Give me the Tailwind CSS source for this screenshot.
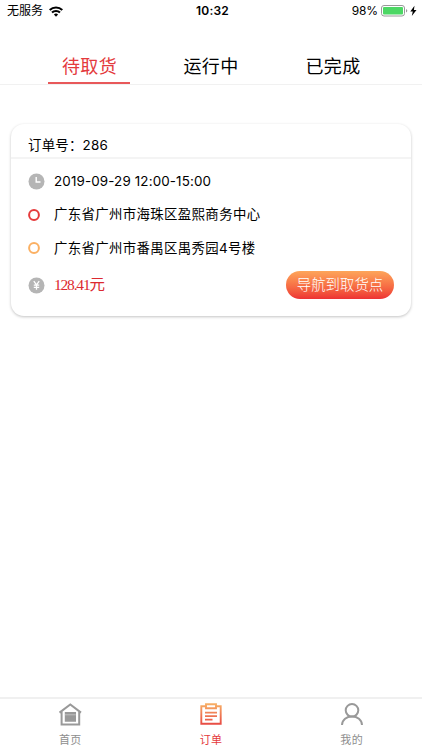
<!DOCTYPE html>
<html lang="zh-CN">
<head>
<meta charset="utf-8">
<title>订单</title>
<script src="https://cdn.jsdelivr.net/npm/@tailwindcss/browser@4"></script>
</head>
<body class="bg-white font-['Inter','Noto_Sans_CJK_SC',sans-serif] text-black">
<div class="flex h-[750px] w-[422px] flex-col overflow-hidden">
  <header class="grid h-[22px] shrink-0 grid-cols-3 items-center pr-[4px] pl-[7px] text-[12px] leading-[22px] whitespace-nowrap">
    <div class="flex items-center gap-[6px]">
      <span>无服务</span>
      <svg class="h-[11px] w-[14px]" viewBox="0 0 14 11" fill="none" stroke="#000" stroke-width="2.1"><path d="M.7 4a9 9 0 0 1 12.6 0M3 6.6a5.7 5.7 0 0 1 8 0"/><path d="M7 10.7 4.9 8.6a3 3 0 0 1 4.2 0z" fill="#000" stroke="none"/></svg>
    </div>
    <div class="text-center font-semibold tracking-[.25px]">10:32</div>
    <div class="flex items-center justify-end">
      <span class="mr-[3px] tracking-[-.1px]">98%</span>
      <svg class="h-[12px] w-[37px]" viewBox="0 0 37 12"><rect x=".5" y=".5" width="23" height="10.5" rx="2.5" fill="#fff" stroke="#999"/><rect x="2" y="2" width="20" height="7.5" rx="1" fill="#4cd764"/><path d="M25 4v3.5q1.3-.5 1.3-1.75T25 4" fill="#999"/><path d="M33.5.8 29.3 6.4h2.5L30.8 11l4.7-6h-2.6z"/></svg>
    </div>
  </header>

  <nav class="flex h-[63px] shrink-0 items-end justify-between border-b border-[#f1f1f1] px-[48px] text-[18px] tracking-[.4px]">
    <div class="flex h-[36px] w-[82px] justify-center border-b-2 border-[#e8585a] pl-px leading-[38px] text-[#e43a3d]">待取货</div>
    <div class="h-[36px] w-[82px] text-center leading-[38px]">运行中</div>
    <div class="h-[36px] w-[82px] text-center leading-[38px]">已完成</div>
  </nav>

  <main class="flex-1 px-[11px] pt-[39px]">
    <section class="h-[192px] rounded-[13px] bg-white text-[13.4px] shadow-[0_1px_3px_rgba(0,0,0,.24)]">
      <h2 class="flex h-[35px] items-center border-b-2 border-[#f4f4f4] pt-[9px] pl-[17px] tracking-[.25px]">订单号：286</h2>
      <div class="flex flex-col pr-[17px] pl-[17px]">
        <div class="flex h-[44px] items-center gap-[9px]">
          <svg class="size-[17px]" viewBox="0 0 17 17"><circle cx="8.5" cy="8.5" r="8" fill="#b5b5b5"/><path d="M8.2 4v5h4.3" fill="none" stroke="#fff" stroke-width="1.4"/></svg>
          <span class="tracking-[.14px]">2019-09-29 12:00-15:00</span>
        </div>
        <div class="flex h-[23px] items-center gap-[14px]">
          <svg class="size-[12px]" viewBox="0 0 12 12"><circle cx="6" cy="6" r="4.9" fill="none" stroke="#e63b3c" stroke-width="2"/></svg>
          <span class="tracking-[.37px]">广东省广州市海珠区盈熙商务中心</span>
        </div>
        <div class="flex h-[44px] items-center gap-[14px]">
          <svg class="size-[12px]" viewBox="0 0 12 12"><circle cx="6" cy="6" r="4.9" fill="none" stroke="#fbb063" stroke-width="2"/></svg>
          <span class="tracking-[.35px]">广东省广州市番禺区禺秀园4号楼</span>
        </div>
        <div class="flex h-[30px] items-center">
          <svg class="size-[17px]" viewBox="0 0 17 17"><circle cx="8.5" cy="8.5" r="8" fill="#b5b5b5"/><path d="m5.8 4.2 2.7 3.6 2.7-3.6M8.5 7.8v5M5.8 8.2h5.4M5.8 10.3h5.4" fill="none" stroke="#fff" stroke-width="1.3"/></svg>
          <span class="ml-[9px] font-['Liberation_Serif','Noto_Sans_CJK_SC',serif] text-[15.5px] tracking-[-1.2px] text-[#dc2930]">128.41元</span>
          <button class="ml-auto h-[28px] w-[108px] rounded-full bg-linear-to-b from-[#fda55a] to-[#ed3033] text-[14.4px] leading-[28px] font-light whitespace-nowrap text-white">导航到取货点</button>
        </div>
      </div>
    </section>
  </main>

  <footer class="grid h-[53px] shrink-0 grid-cols-3 border-t-2 border-[#f0f0f0] text-[11px] leading-[16px] tracking-[.3px] text-[#8e8e8e]">
    <div class="flex flex-col items-center gap-[5px] pt-[4px]">
      <svg class="size-[24px]" viewBox="0 0 24 24" fill="none" stroke="#999" stroke-width="2"><path d="M1.5 9.6 12.3 1.4 23 9.6M3.6 8.6v12.8h17.6V8.6"/><path d="M7.5 9.8h9.8v8.2H7.5z" fill="#999" stroke-width="1.4"/><path d="M7 11.8h10.8" stroke="#ccc" stroke-width=".8"/></svg>
      <span>首页</span>
    </div>
    <div class="flex flex-col items-center gap-[5px] pt-[4px] text-[#e43a3d]">
      <svg class="size-[24px]" viewBox="0 0 24 24" fill="none" stroke="url(#warm)" stroke-width="1.9"><defs><linearGradient id="warm" gradientUnits="userSpaceOnUse" x1="0" y1="1" x2="0" y2="22"><stop stop-color="#f7ae65"/><stop offset="1" stop-color="#e74843"/></linearGradient></defs><path d="M7 3.3H2.3v17.4h19.4V3.3H17M7 1.2h10v4H7zM6 9.6h12M6 13.1h12M6 16.6h7.5"/></svg>
      <span>订单</span>
    </div>
    <div class="flex flex-col items-center gap-[5px] pt-[4px]">
      <svg class="size-[24px]" viewBox="0 0 24 24" fill="none" stroke="#999" stroke-width="2"><circle cx="12" cy="7.3" r="6.3"/><path d="M2 22c.3-5.2 4.5-8.4 10-8.4S21.700 16.800 22 22"/></svg>
      <span>我的</span>
    </div>
  </footer>
</div>
</body>
</html>
